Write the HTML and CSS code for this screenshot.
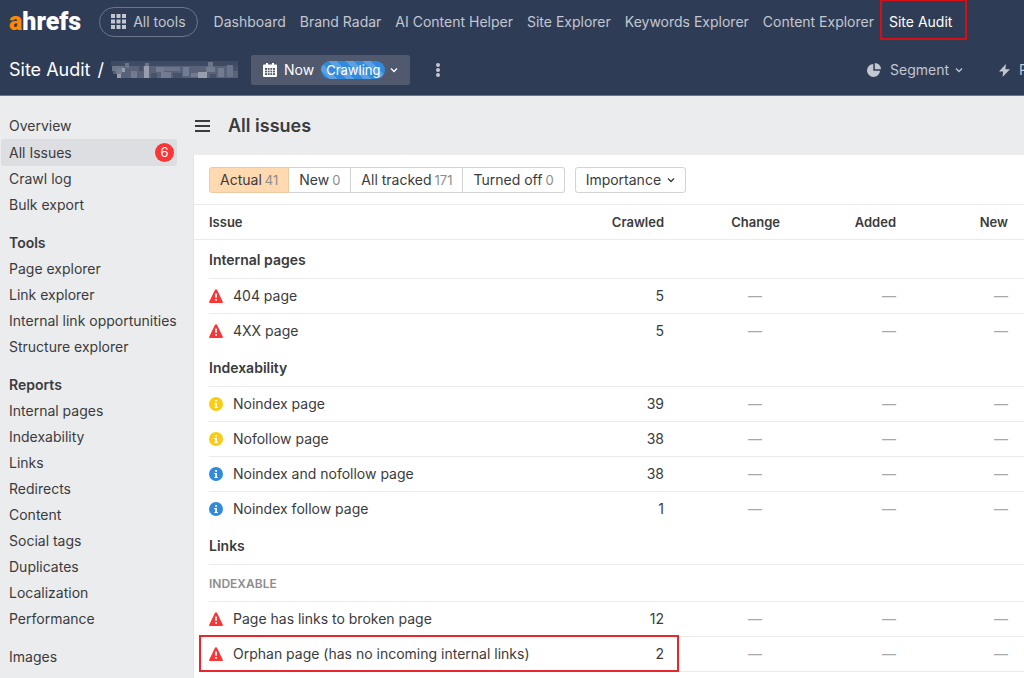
FILE: index.html
```html
<!DOCTYPE html>
<html lang="en">
<head>
    <meta charset="UTF-8">
    <meta name="viewport" content="width=device-width, initial-scale=1.0">
    <title>Site Audit - All issues</title>
    <link rel="stylesheet" href="styles.css">
</head>
<body>
    <svg class="sprite" aria-hidden="true">
        <symbol id="warn" viewBox="0 0 14 14">
            <path d="M7 0.2c.5 0 .8.2 1 .6l5.8 12c.3.6 0 1.2-.7 1.2H.9c-.7 0-1-.6-.7-1.2L6 .8c.2-.4.5-.6 1-.6z" fill="#f93536"/>
            <path d="M6.1 4.6h1.8v4.2H6.1zM6.1 10h1.8v1.8H6.1z" fill="#fff"/>
        </symbol>
        <symbol id="info" viewBox="0 0 14 14">
            <circle cx="7" cy="7" r="7" fill="currentColor"/>
            <path d="M6.200 3H8v1.800H6.200zM5.200 5.900H8V10h.8v1H5.400v-1h.8V6.900h-1z" fill="#fff"/>
        </symbol>
        <symbol id="chevron" viewBox="0 0 8 8">
            <path d="M1 2.500l3 3 3-3" fill="none" stroke="currentColor" stroke-width="1.3"/>
        </symbol>
    </svg>

    <header class="header">
        <nav class="nav">
            <a class="logo" href="#"><span>a</span>hrefs</a>
            <button class="all-tools" type="button">
                <svg width="15" height="15" viewBox="0 0 15 15" fill="currentColor" aria-hidden="true">
                    <path d="M0 0h4v4H0zM5.500 0h4v4h-4zM11 0h4v4h-4zM0 5.500h4v4H0zM5.500 5.500h4v4h-4zM11 5.500h4v4h-4zM0 11h4v4H0zM5.500 11h4v4h-4zM11 11h4v4h-4z"/>
                </svg>
                All tools
            </button>
            <a href="#">Dashboard</a>
            <a href="#">Brand Radar</a>
            <a href="#">AI Content Helper</a>
            <a href="#">Site Explorer</a>
            <a href="#">Keywords Explorer</a>
            <a href="#">Content Explorer</a>
            <a class="current" href="#">Site Audit</a>
        </nav>
        <div class="toolbar">
            <div class="crumbs">
                <a href="#">Site Audit</a>
                <span>/</span>
                <svg width="127" height="20" viewBox="0 0 127 20" aria-hidden="true">
                    <path d="M0 1h127v5H0z" fill="#3f4a63"/>
                    <path d="M2 6h125v12H6v-4H2z" fill="#58627a"/>
                    <path d="M1 6h12v5H1zM14 3h4v5h-4zM34 3h4v15h-4zM53 7h16v4H53zM97 2h5v5h-5zM116 5h6v12h-6z" fill="#6b7489"/>
                    <path d="M5 8h6v6H5zM20 11h6v7h-6zM45 7h8v5h-8zM50 12h10v6H50zM72 7h6v9h-6zM80 13h8v4h-8zM95 7h9v5h-9zM107 8h6v9h-6z" fill="#737b90"/>
                    <path d="M6 14h4v4H6zM11 8h3v4h-3zM33 6h5v12h-5zM87 12h9v6h-9z" fill="#989eac"/>
                    <path d="M28 6h4v5h-4zM40 13h6v5h-6zM62 13h9v5h-9zM99 14h6v4h-6zM122 6h5v5h-5z" fill="#485369"/>
                </svg>
            </div>
            <button class="crawl" type="button">
                <svg width="14" height="14" viewBox="0 0 14 14" aria-hidden="true">
                    <path d="M1 1.500h2V0h2v1.500h4V0h2v1.500h2a1 1 0 0 1 1 1V13a1 1 0 0 1-1 1H1a1 1 0 0 1-1-1V2.500a1 1 0 0 1 1-1z" fill="#fff"/>
                    <path d="M2 5h10v7H2z" fill="#50596e"/>
                    <path d="M2 7.300h10M2 9.700h10M4.500 5v7M7 5v7M9.500 5v7" stroke="#fff" stroke-width=".8"/>
                </svg>
                Now
                <span class="status">Crawling</span>
                <svg class="arrow" width="8" height="8" aria-hidden="true"><use href="#chevron"/></svg>
            </button>
            <button class="more" type="button" aria-label="More">
                <svg width="6" height="16" viewBox="0 0 6 16" fill="currentColor" aria-hidden="true">
                    <circle cx="3" cy="3" r="2"/><circle cx="3" cy="8" r="2"/><circle cx="3" cy="13" r="2"/>
                </svg>
            </button>
            <div class="actions">
                <button type="button">
                    <svg width="14" height="14" viewBox="0 0 14 14" fill="currentColor" aria-hidden="true">
                        <path d="M6.300 1v6.700H13A6.500 6.500 0 1 1 6.300 1z"/>
                        <path d="M7.800 0A6.200 6.200 0 0 1 14 6.200H7.800z"/>
                    </svg>
                    Segment
                    <svg class="arrow" width="8" height="8" aria-hidden="true"><use href="#chevron"/></svg>
                </button>
                <button class="patches" type="button">
                    <svg width="11" height="13" viewBox="0 0 12 14" fill="currentColor" aria-hidden="true">
                        <path d="M7.500 0L0 8.200h4.600L3.800 14 12 5.600H7z"/>
                    </svg>
                    Patches
                </button>
            </div>
        </div>
    </header>

    <div class="layout">
        <aside class="sidebar">
            <ul>
                <li><a href="#">Overview</a></li>
                <li><a class="active" href="#">All Issues <span class="badge">6</span></a></li>
                <li><a href="#">Crawl log</a></li>
                <li><a href="#">Bulk export</a></li>
            </ul>
            <h2>Tools</h2>
            <ul>
                <li><a href="#">Page explorer</a></li>
                <li><a href="#">Link explorer</a></li>
                <li><a href="#">Internal link opportunities</a></li>
                <li><a href="#">Structure explorer</a></li>
            </ul>
            <h2>Reports</h2>
            <ul>
                <li><a href="#">Internal pages</a></li>
                <li><a href="#">Indexability</a></li>
                <li><a href="#">Links</a></li>
                <li><a href="#">Redirects</a></li>
                <li><a href="#">Content</a></li>
                <li><a href="#">Social tags</a></li>
                <li><a href="#">Duplicates</a></li>
                <li><a href="#">Localization</a></li>
                <li><a href="#">Performance</a></li>
            </ul>
            <ul>
                <li><a href="#">Images</a></li>
            </ul>
        </aside>

        <main class="main">
            <div class="title">
                <button class="burger" type="button" aria-label="Toggle menu"></button>
                <h1>All issues</h1>
            </div>
            <div class="panel">
                <div class="filters">
                    <div class="tabs">
                        <button class="selected" type="button">Actual <span>41</span></button>
                        <button type="button">New <span>0</span></button>
                        <button type="button">All tracked <span>171</span></button>
                        <button type="button">Turned off <span>0</span></button>
                    </div>
                    <button class="importance" type="button">
                        Importance
                        <svg width="8" height="8" aria-hidden="true"><use href="#chevron"/></svg>
                    </button>
                </div>
                <table class="issues">
                    <thead>
                        <tr>
                            <th class="name">Issue</th>
                            <th class="number">Crawled</th>
                            <th class="number">Change</th>
                            <th class="number">Added</th>
                            <th>New</th>
                        </tr>
                    </thead>
                    <tbody>
                        <tr class="group"><th colspan="5">Internal pages</th></tr>
                        <tr><td><svg class="icon"><use href="#warn"/></svg>404 page</td><td>5</td><td>—</td><td>—</td><td>—</td></tr>
                        <tr><td><svg class="icon"><use href="#warn"/></svg>4XX page</td><td>5</td><td>—</td><td>—</td><td>—</td></tr>
                    </tbody>
                    <tbody>
                        <tr class="group"><th colspan="5">Indexability</th></tr>
                        <tr><td><svg class="icon yellow"><use href="#info"/></svg>Noindex page</td><td>39</td><td>—</td><td>—</td><td>—</td></tr>
                        <tr><td><svg class="icon yellow"><use href="#info"/></svg>Nofollow page</td><td>38</td><td>—</td><td>—</td><td>—</td></tr>
                        <tr><td><svg class="icon blue"><use href="#info"/></svg>Noindex and nofollow page</td><td>38</td><td>—</td><td>—</td><td>—</td></tr>
                        <tr><td><svg class="icon blue"><use href="#info"/></svg>Noindex follow page</td><td>1</td><td>—</td><td>—</td><td>—</td></tr>
                    </tbody>
                    <tbody>
                        <tr class="group"><th colspan="5">Links</th></tr>
                        <tr class="subgroup"><th colspan="5">INDEXABLE</th></tr>
                        <tr><td><svg class="icon"><use href="#warn"/></svg>Page has links to broken page</td><td>12</td><td>—</td><td>—</td><td>—</td></tr>
                        <tr class="marked"><td><svg class="icon"><use href="#warn"/></svg>Orphan page (has no incoming internal links)</td><td>2</td><td>—</td><td>—</td><td>—</td></tr>
                    </tbody>
                </table>
            </div>
        </main>
    </div>
</body>
</html>
```
FILE: styles.css
```css
* {
    box-sizing: border-box;
}
body {
    font-family: Inter, "Liberation Sans", sans-serif;
    font-size: 14px;
    line-height: 20px;
    color: #3b3b3c;
    background: #ebecee;
    margin: 0;
    height: 100vh;
    display: flex;
    flex-direction: column;
    overflow: hidden;
}
a {
    color: inherit;
    text-decoration: none;
}
button {
    font: inherit;
    color: inherit;
    background: none;
    border: 0;
    padding: 0;
    display: flex;
    align-items: center;
    white-space: nowrap;
}
svg {
    flex: none;
}
h1, h2, ul {
    margin: 0;
    padding: 0;
    list-style: none;
}
.sprite {
    display: none;
}

/* header */
.header {
    flex: none;
    background: #2f3c56;
    color: #c3c7cf;
    border-bottom: 1px solid #6b7488;
    overflow: hidden;
}
.nav {
    display: flex;
    align-items: center;
    gap: 14px;
    height: 43px;
    padding-left: 9px;
    white-space: nowrap;
}
.logo {
    font-family: Roboto, sans-serif;
    font-size: 25px;
    font-weight: 900;
    color: #fff;
    margin-right: 4px;
}
.logo span {
    color: #ff8800;
}
.all-tools {
    gap: 7px;
    height: 30px;
    padding: 0 11px;
    margin-right: 2px;
    border: 1px solid #6d7689;
    border-radius: 15px;
}
.nav .current {
    color: #fff;
    align-self: flex-start;
    height: 40px;
    margin-left: -8px;
    padding: 11px 13px 0 7px;
    border: 2px solid #d50f16;
    border-top-width: 1px;
}
.toolbar {
    display: flex;
    align-items: center;
    height: 52px;
    padding: 2px 0 0 9px;
}
.crumbs {
    display: flex;
    align-items: center;
    gap: 7px;
    font-size: 18px;
    color: #fff;
    white-space: nowrap;
}
.crawl {
    gap: 7px;
    height: 30px;
    margin-left: 13px;
    padding: 0 12px;
    color: #fff;
    background: #50596e;
    border-radius: 2px;
}
.status {
    font-size: 13px;
    line-height: 18px;
    padding: 0 5px;
    border-radius: 9px;
    background: repeating-linear-gradient(45deg, #328adc 0 6px, #5ba0e3 6px 12px);
}
.crawl .arrow {
    margin-left: -2px;
}
.more {
    margin-left: 25px;
}
.actions {
    display: flex;
    gap: 36px;
    margin-left: auto;
}
.actions button {
    gap: 9px;
}
.actions .arrow {
    margin-left: -3px;
}
.actions .patches {
    width: 25px;
}

/* sidebar */
.layout {
    flex: 1;
    min-height: 0;
    display: flex;
}
.sidebar {
    flex: none;
    width: 193px;
    padding: 17px 16px 0 1px;
    line-height: 26px;
    white-space: nowrap;
}
.sidebar h2 {
    font-size: 14px;
    font-weight: 600;
    padding-left: 8px;
}
.sidebar ul {
    margin-bottom: 12px;
}
.sidebar li a {
    display: flex;
    align-items: center;
    justify-content: space-between;
    padding: 0 3px 0 8px;
    border-radius: 3px;
}
.sidebar .active {
    height: 27px;
    background: #dddee2;
}
.badge {
    width: 19px;
    height: 19px;
    border-radius: 50%;
    background: #f93536;
    color: #fff;
    font-size: 13px;
    line-height: 19px;
    text-align: center;
}

/* content */
.main {
    flex: 1;
    min-width: 0;
    display: flex;
    flex-direction: column;
}
.title {
    flex: none;
    display: flex;
    align-items: center;
    gap: 18px;
    height: 59px;
    padding-left: 2px;
}
.title h1 {
    font-size: 18px;
    font-weight: 600;
}
.burger {
    width: 15px;
    height: 12px;
    border-top: 2px solid #3b3b3c;
    border-bottom: 2px solid #3b3b3c;
    background: linear-gradient(#3b3b3c, #3b3b3c) 0 3px / 100% 2px no-repeat;
}
.panel {
    flex: 1;
    background: #fff;
    border-left: 1px solid #e3e4e7;
}
.filters {
    display: flex;
    gap: 10px;
    padding: 12px 15px 11px;
    border-bottom: 1px solid #ebebed;
}
.tabs {
    display: flex;
}
.tabs button,
.importance {
    gap: 3px;
    height: 26px;
    padding: 0 10px;
    border: 1px solid #d2d3d5;
}
.tabs button + button {
    border-left: 0;
}
.tabs button:first-child {
    border-radius: 3px 0 0 3px;
}
.tabs button:last-child {
    border-radius: 0 3px 3px 0;
}
.tabs span {
    color: #8d8d8e;
    font-size: 13px;
}
.tabs .selected {
    background: #ffd9b0;
    border-color: #eecaa2;
}
.importance {
    gap: 6px;
    border-radius: 3px;
}
.issues {
    width: 100%;
    table-layout: fixed;
    border-spacing: 0;
}
.issues th,
.issues td {
    height: 35px;
    padding: 0;
    text-align: right;
    font-weight: 400;
}
.issues td {
    padding-bottom: 2px;
}
.issues thead th {
    font-size: 13px;
    font-weight: 600;
    border-bottom: 1px solid #ebebed;
}
.issues th:first-child,
.issues td:first-child {
    text-align: left;
    padding-left: 15px;
    white-space: nowrap;
}
.issues td:nth-child(n+3) {
    color: #a9a9aa;
}
.issues td:nth-child(3) {
    padding-right: 18px;
}
.issues th:last-child,
.issues td:last-child {
    padding-right: 16px;
}
.issues .name {
    width: 354px;
}
.issues .number {
    width: 116px;
}
/* row lines start at the text, not at the panel edge */
.issues tbody tr {
    background: linear-gradient(#ebebed, #ebebed) 15px 100% / 100% 1px no-repeat;
}
.issues tbody:not(:last-child) tr:last-child {
    background: none;
}
.issues tbody:not(:last-child) tr:last-child td {
    height: 34px;
    padding-bottom: 0;
}
.issues .group th {
    height: 39px;
    font-weight: 600;
}
.issues .subgroup th {
    height: 37px;
    font-size: 12px;
    font-weight: 600;
    color: #8d8d8e;
}
.marked td:first-child {
    position: relative;
}
.marked td:first-child::after {
    content: "";
    position: absolute;
    top: -2px;
    left: 5px;
    width: 476px;
    height: 33px;
    border: 2px solid #e8262c;
}
.icon {
    width: 14px;
    height: 14px;
    margin-right: 10px;
    vertical-align: -2px;
}
.yellow {
    color: #fccb14;
}
.blue {
    color: #328adc;
}
```
